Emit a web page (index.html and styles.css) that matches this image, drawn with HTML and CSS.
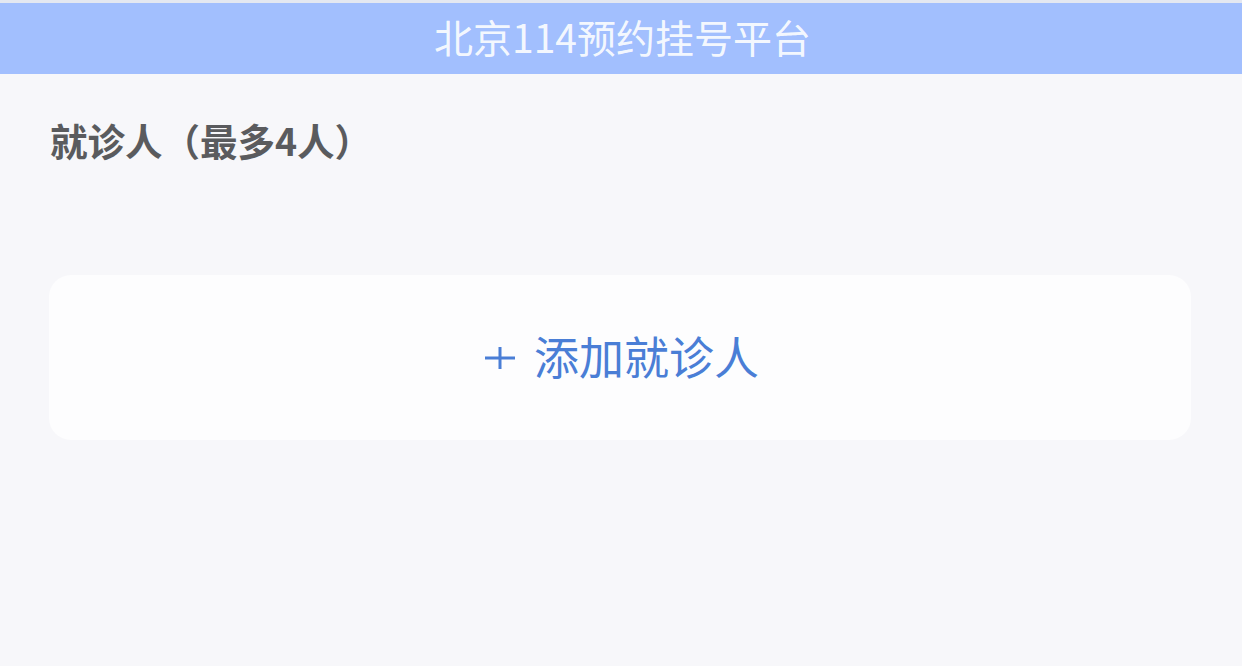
FILE: index.html
```html
<!DOCTYPE html>
<html lang="zh-CN">
<head>
<meta charset="utf-8">
<title>北京114预约挂号平台</title>
<link rel="stylesheet" href="styles.css">
</head>
<body>
<header class="topbar">
  <h1 class="topbar-title">北京114预约挂号平台</h1>
</header>
<main class="content">
  <h2 class="section-label">就诊人（最多4人）</h2>
  <button class="add-card" type="button">
    <svg class="add-plus" width="30" height="22" viewBox="0 0 30 22" aria-hidden="true">
      <path d="M0 11H30M15 0V22" stroke="currentColor" stroke-width="3" fill="none"/>
    </svg>
    <span class="add-text">添加就诊人</span>
  </button>
</main>
</body>
</html>
```

FILE: styles.css
```css
* { box-sizing: border-box; }
html, body {
  margin: 0;
  padding: 0;
  background: #f7f7fa;
  font-family: "Noto Sans CJK SC", "Noto Sans", sans-serif;
}
.topbar {
  border-top: 3px solid #e4e8f1;
  height: 74px;
  background: #a2bffe;
  display: flex;
  align-items: center;
  justify-content: center;
}
.topbar-title {
  margin: 0;
  font-size: 39px;
  font-weight: 400;
  line-height: 1;
  color: rgba(255, 255, 255, 0.9);
  padding-bottom: 4px;
  padding-left: 3px;
}
.content {
  padding: 0 50px 0 49px;
  display: flex;
  flex-direction: column;
}
.section-label {
  margin: 47px 0 0 1px;
  font-size: 37.5px;
  line-height: 38px;
  font-weight: 700;
  color: #5a5b5e;
}
.add-card {
  margin-top: 116px;
  width: 1142px;
  height: 165px;
  border: none;
  border-radius: 22px;
  background: #fdfdfe;
  display: flex;
  align-items: center;
  justify-content: center;
  gap: 19px;
  font-family: inherit;
  color: #4a7ed6;
  padding: 0 0 0 4px;
}
.add-plus {
  display: block;
  flex: none;
}
.add-text {
  font-size: 45px;
  line-height: 1;
  font-weight: 400;
  padding-bottom: 4px;
}
```
